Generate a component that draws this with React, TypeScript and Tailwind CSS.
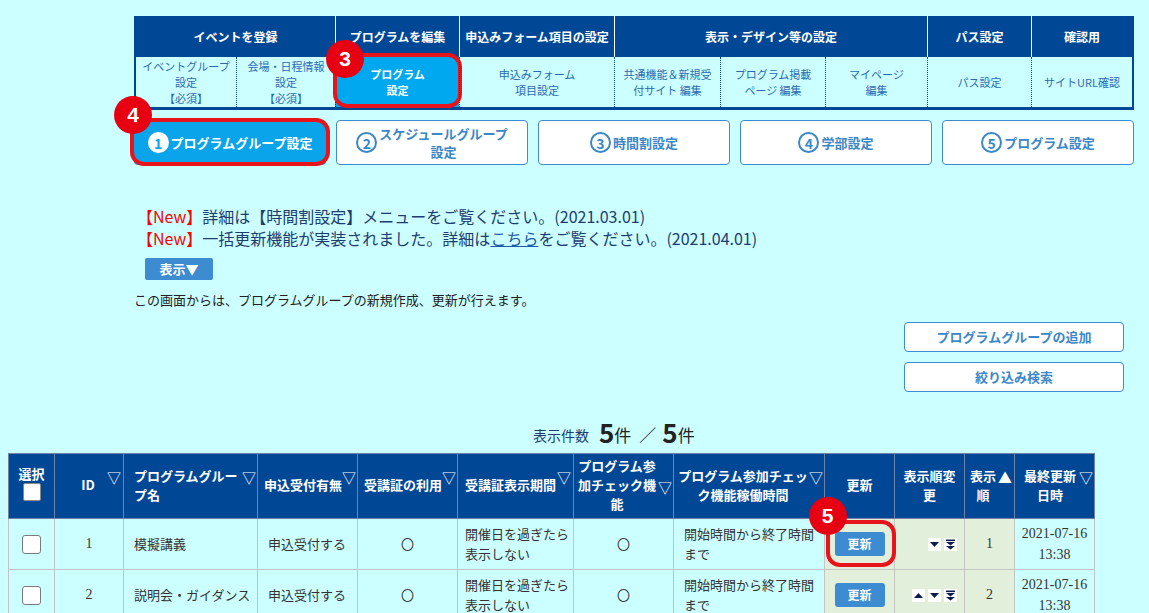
import React from 'react';

const navTop = [
  { label: 'イベントを登録', span: 'col-span-2' },
  { label: 'プログラムを編集', span: 'col-span-1' },
  { label: '申込みフォーム項目の設定', span: 'col-span-1' },
  { label: '表示・デザイン等の設定', span: 'col-span-3' },
  { label: 'パス設定', span: 'col-span-1' },
  { label: '確認用', span: 'col-span-1' },
];

const navSub = [
  ['イベントグループ', '設定', '【必須】'],
  ['会場・日程情報', '設定', '【必須】'],
  ['プログラム', '設定'],
  ['申込みフォーム', '項目設定'],
  ['共通機能＆新規受', '付サイト 編集'],
  ['プログラム掲載', 'ページ 編集'],
  ['マイページ', '編集'],
  ['パス設定'],
  ['サイトURL確認'],
];

const steps = [
  { n: '1', lines: ['プログラムグループ設定'] },
  { n: '2', lines: ['スケジュールグループ', '設定'] },
  { n: '3', lines: ['時間割設定'] },
  { n: '4', lines: ['学部設定'] },
  { n: '5', lines: ['プログラム設定'] },
];

const rows = [
  { id: '1', name: '模擬講義', order: '1', arrows: ['down', 'last'] as const },
  { id: '2', name: '説明会・ガイダンス', order: '2', arrows: ['up', 'down', 'last'] as const },
];

const Badge = ({ n, className }: { n: string; className: string }) => (
  <div className={`absolute w-[38px] h-[38px] rounded-full bg-[#e60012] text-white font-bold text-[21px] flex items-center justify-center font-['Liberation_Sans',sans-serif] z-10 ${className}`}>
    {n}
  </div>
);

const ArrowBox = ({ kind }: { kind: 'up' | 'down' | 'last' }) => (
  <span className="inline-flex w-[13px] h-[13px] bg-white items-center justify-center">
    <svg width="11" height="11" viewBox="0 0 11 11">
      {kind === 'up' && <path d="M1 8 L5.5 3 L10 8 Z" fill="#0d1b4d" />}
      {kind === 'down' && <path d="M1 3 L10 3 L5.5 8 Z" fill="#0d1b4d" />}
      {kind === 'last' && (
        <>
          <rect x="1" y="0.5" width="9" height="1.6" fill="#0d1b4d" />
          <path d="M1 3 L10 3 L5.5 6.5 Z" fill="#0d1b4d" />
          <path d="M1 7 L10 7 L5.5 10.5 Z" fill="#0d1b4d" />
        </>
      )}
    </svg>
  </span>
);

const Sort = ({ up, center }: { up?: boolean; center?: boolean }) => (
  <span className={`text-[14px] leading-none font-normal shrink-0 ${center ? 'self-center mt-[4px]' : 'self-start mt-[16px]'}`}>
    {up ? '▲' : '▽'}
  </span>
);

const th = 'border border-[#6f82a6] p-0 align-middle';

const App = () => {
  return (
    <div className="min-h-screen bg-[#ccffff] font-['Noto_Sans_CJK_JP',sans-serif] pt-[16px] pb-[40px]">
      {/* top nav */}
      <div className="ml-[134px] w-[1000px] border-l-2 border-r-2 border-b-[3px] border-[#004896]">
        <div className="grid grid-cols-[100px_99px_124px_155px_106px_105px_102px_104px_101px]">
          {navTop.map((t, i) => (
            <div
              key={t.label}
              className={`${t.span} h-[41px] bg-[#004896] text-white font-bold text-[12px] flex items-center justify-center ${i > 0 ? 'border-l border-white' : ''}`}
            >
              {t.label}
            </div>
          ))}
          {navSub.map((s, i) => (
            <div
              key={i}
              className={`relative h-[50px] flex flex-col items-center justify-center text-[11px] leading-[16px] ${i > 0 ? 'border-l border-dotted border-[#004896]' : ''} ${i === 2 ? 'bg-[#00a8f0] text-white font-bold' : 'text-[#2b6ab2]'}`}
            >
              {s.map((l) => (
                <span key={l}>{l}</span>
              ))}
              {i === 2 && (
                <>
                  <div className="absolute -left-[3px] -right-[3px] -top-[4px] -bottom-[1px] border-[4px] border-[#e8141c] rounded-[14px]" />
                  <Badge n="3" className="-left-[10px] -top-[17px]" />
                </>
              )}
            </div>
          ))}
        </div>
      </div>

      {/* steps */}
      <div className="ml-[134px] w-[1000px] mt-[10px] flex gap-[10px]">
        {steps.map((s, i) => (
          <div
            key={s.n}
            className={`relative w-[192px] h-[45px] rounded-[4px] flex items-center justify-center gap-[2px] text-[13px] font-bold leading-[18px] ${i === 0 ? 'bg-[#0aa4ea] text-white' : 'bg-white border border-[#3d8bd0] text-[#3b87c8]'}`}
          >
            <span
              className={`w-[21px] h-[21px] rounded-full flex items-center justify-center text-[14px] font-bold shrink-0 ${i === 0 ? 'bg-white text-[#0aa4ea]' : 'border-2 border-[#3b87c8]'}`}
            >
              {s.n}
            </span>
            <span className="flex flex-col items-center">
              {s.lines.map((l) => (
                <span key={l}>{l}</span>
              ))}
            </span>
            {i === 0 && (
              <>
                <div className="absolute -left-[4px] -right-[4px] -top-[2px] -bottom-[1px] border-[4px] border-[#e8141c] rounded-[14px]" />
                <Badge n="4" className="-left-[20px] -top-[24px]" />
              </>
            )}
          </div>
        ))}
      </div>

      {/* news */}
      <div className="ml-[137px] mt-[40px] text-[16px] leading-[22px] text-[#1d3d70]">
        <p>
          <span className="text-[#ff0000]">【New】</span>詳細は【時間割設定】メニューをご覧ください。(2021.03.01)
        </p>
        <p>
          <span className="text-[#ff0000]">【New】</span>一括更新機能が実装されました。詳細は
          <span className="underline text-[#1f5aa6]">こちら</span>をご覧ください。(2021.04.01)
        </p>
      </div>
      <button className="ml-[145px] mt-[9px] w-[68px] h-[22px] bg-[#3d8bd0] rounded-[2px] text-white font-bold text-[13px] flex items-center justify-center">
        表示▼
      </button>
      <p className="ml-[134px] mt-[10px] text-[13px] leading-[20px] text-[#222]">
        この画面からは、プログラムグループの新規作成、更新が行えます。
      </p>

      {/* right buttons */}
      <div className="ml-[904px] mt-[12px] flex flex-col gap-[10px] w-[220px]">
        <button className="h-[30px] bg-white border border-[#3d8bd0] rounded-[4px] text-[#3b87c8] font-bold text-[13px]">
          プログラムグループの追加
        </button>
        <button className="h-[30px] bg-white border border-[#3d8bd0] rounded-[4px] text-[#3b87c8] font-bold text-[13px]">
          絞り込み検索
        </button>
      </div>

      {/* count */}
      <div className="ml-[533px] mt-[23px] h-[32px] flex items-end text-[#1d3d70]">
        <span className="text-[14px] leading-[22px] mb-[1px]">表示件数</span>
        <span className="ml-[10px] text-[26px] font-bold leading-[30px] text-[#222]">5</span>
        <span className="text-[17px] leading-[24px] text-[#222]">件</span>
        <span className="ml-[8px] mr-[6px] text-[17px] leading-[24px] text-[#222]">／</span>
        <span className="text-[26px] font-bold leading-[30px] text-[#222]">5</span>
        <span className="text-[17px] leading-[24px] text-[#222]">件</span>
      </div>

      {/* table */}
      <table className="ml-[8px] mt-[6px] w-[1086px] table-fixed border-collapse text-[13px]">
        <colgroup>
          <col className="w-[46px]" />
          <col className="w-[69px]" />
          <col className="w-[134px]" />
          <col className="w-[100px]" />
          <col className="w-[100px]" />
          <col className="w-[116px]" />
          <col className="w-[100px]" />
          <col className="w-[151px]" />
          <col className="w-[70px]" />
          <col className="w-[70px]" />
          <col className="w-[50px]" />
          <col className="w-[80px]" />
        </colgroup>
        <thead>
          <tr className="bg-[#004896] text-white font-bold leading-[19px]">
            <th className={th}>
              <div className="h-[64px] flex flex-col items-center justify-center pb-[8px]">
                <span>選択</span>
                <span className="w-[18px] h-[18px] bg-white border border-[#888] rounded-[2px]" />
              </div>
            </th>
            <th className={th}>
              <div className="h-[64px] flex pr-[2px] pb-[4px]">
                <span className="flex-1 text-center self-center pl-[14px]">ID</span>
                <Sort />
              </div>
            </th>
            <th className={th}>
              <div className="h-[64px] flex text-left pl-[10px] pr-[1px] pb-[3px]">
                <span className="flex-1 self-center">
                  プログラムグルー
                  <br />
                  プ名
                </span>
                <Sort />
              </div>
            </th>
            <th className={th}>
              <div className="h-[64px] flex text-left pl-[6px] pr-[1px] pb-[4px]">
                <span className="flex-1 self-center whitespace-nowrap">申込受付有無</span>
                <Sort />
              </div>
            </th>
            <th className={th}>
              <div className="h-[64px] flex text-left pl-[6px] pr-[1px] pb-[4px]">
                <span className="flex-1 self-center whitespace-nowrap">受講証の利用</span>
                <Sort />
              </div>
            </th>
            <th className={th}>
              <div className="h-[64px] flex text-left pl-[7px] pr-[2px] pb-[4px]">
                <span className="flex-1 self-center whitespace-nowrap">受講証表示期間</span>
                <Sort />
              </div>
            </th>
            <th className={th}>
              <div className="h-[64px] flex pl-[2px] pr-[1px] pb-[3px]">
                <span className="flex-1 text-center self-center">
                  プログラム参
                  <br />
                  加チェック機
                  <br />能
                </span>
                <Sort center />
              </div>
            </th>
            <th className={th}>
              <div className="h-[64px] flex pl-[3px] pr-[1px] pb-[3px]">
                <span className="flex-1 text-center self-center whitespace-nowrap">
                  プログラム参加チェッ
                  <br />
                  ク機能稼働時間
                </span>
                <Sort />
              </div>
            </th>
            <th className={`${th} text-center pb-[4px]`}>更新</th>
            <th className={`${th} text-center pb-[3px]`}>
              表示順変
              <br />更
            </th>
            <th className={th}>
              <div className="h-[64px] flex pl-[3px] pr-[2px] pb-[3px]">
                <span className="flex-1 text-center self-center whitespace-nowrap">
                  表示
                  <br />順
                </span>
                <Sort up />
              </div>
            </th>
            <th className={th}>
              <div className="h-[64px] flex pl-[6px] pr-[1px] pb-[3px]">
                <span className="flex-1 text-center self-center">
                  最終更新
                  <br />
                  日時
                </span>
                <Sort />
              </div>
            </th>
          </tr>
        </thead>
        <tbody className="text-[#333] leading-[20px]">
          {rows.map((r, ri) => (
            <tr key={r.id} className="h-[51px]">
              <td className="border border-[#c4c4c4]">
                <div className="flex justify-center">
                  <span className="w-[19px] h-[19px] bg-white border border-[#7a7a7a] rounded-[3px]" />
                </div>
              </td>
              <td className="border border-[#c4c4c4] text-center font-['Liberation_Serif',serif] text-[14px]">{r.id}</td>
              <td className="border border-[#c4c4c4] pl-[10px] whitespace-nowrap">{r.name}</td>
              <td className="border border-[#c4c4c4] pl-[10px]">申込受付する</td>
              <td className="border border-[#c4c4c4] text-center">〇</td>
              <td className="border border-[#c4c4c4] pl-[7px]">
                開催日を過ぎたら
                <br />
                表示しない
              </td>
              <td className="border border-[#c4c4c4] text-center">〇</td>
              <td className="border border-[#c4c4c4] pl-[10px]">
                開始時間から終了時間
                <br />
                まで
              </td>
              <td className="border border-[#c4c4c4] bg-[#e2efda]">
                <div className="flex justify-center">
                  <button className="relative w-[50px] h-[24px] bg-[#3d8bd0] rounded-[3px] text-white font-bold text-[12px]">
                    更新
                    {ri === 0 && (
                      <>
                        <div className="absolute -left-[9px] -right-[11px] -top-[12px] -bottom-[11px] border-[4px] border-[#e8141c] rounded-[14px]" />
                        <Badge n="5" className="-left-[26px] -top-[35px]" />
                      </>
                    )}
                  </button>
                </div>
              </td>
              <td className="border border-[#c4c4c4] bg-[#e2efda] pr-[7px]">
                <div className="flex justify-end gap-[3px]">
                  {r.arrows.map((a) => (
                    <ArrowBox key={a} kind={a} />
                  ))}
                </div>
              </td>
              <td className="border border-[#c4c4c4] bg-[#e2efda] text-center font-['Liberation_Serif',serif] text-[14px]">{r.order}</td>
              <td className="border border-[#c4c4c4] text-center font-['Liberation_Serif',serif] text-[14px] leading-[21px]">
                2021-07-16
                <br />
                13:38
              </td>
            </tr>
          ))}
        </tbody>
      </table>
    </div>
  );
};

export default App;
